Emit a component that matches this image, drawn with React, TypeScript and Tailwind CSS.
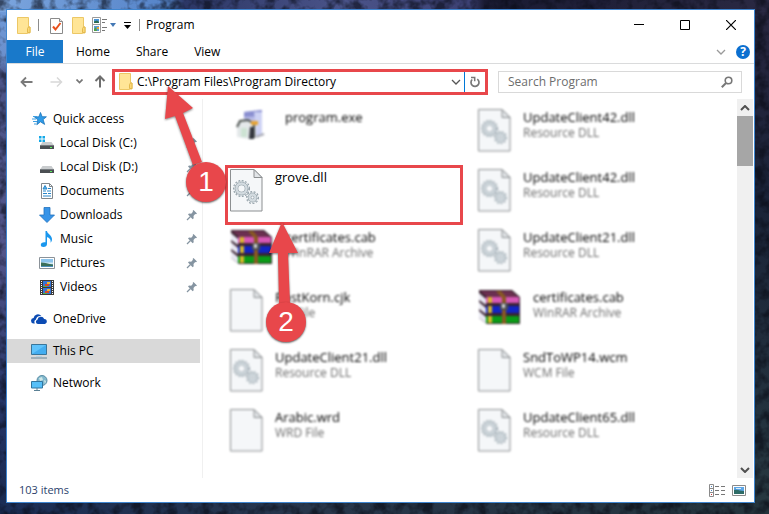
import type { ReactNode } from "react";

type FileKind = "dll" | "blank" | "rar" | "exe";

type FileItem = {
  name: string;
  type?: string;
  kind: FileKind;
  selected?: boolean;
};

const files: FileItem[] = [
  { name: "program.exe", kind: "exe" },
  { name: "UpdateClient42.dll", type: "Resource DLL", kind: "dll" },
  { name: "grove.dll", kind: "dll", selected: true },
  { name: "UpdateClient42.dll", type: "Resource DLL", kind: "dll" },
  { name: "certificates.cab", type: "WinRAR Archive", kind: "rar" },
  { name: "UpdateClient21.dll", type: "Resource DLL", kind: "dll" },
  { name: "PostKorn.cjk", type: "CJK File", kind: "blank" },
  { name: "certificates.cab", type: "WinRAR Archive", kind: "rar" },
  { name: "UpdateClient21.dll", type: "Resource DLL", kind: "dll" },
  { name: "SndToWP14.wcm", type: "WCM File", kind: "blank" },
  { name: "Arabic.wrd", type: "WRD File", kind: "blank" },
  { name: "UpdateClient65.dll", type: "Resource DLL", kind: "dll" },
];

const quickAccess = [
  { name: "Local Disk (C:)", icon: <DiskIcon system /> },
  { name: "Local Disk (D:)", icon: <DiskIcon /> },
  { name: "Documents", icon: <DocumentsIcon /> },
  { name: "Downloads", icon: <DownloadsIcon /> },
  { name: "Music", icon: <MusicIcon /> },
  { name: "Pictures", icon: <PicturesIcon /> },
  { name: "Videos", icon: <VideosIcon /> },
];

function FolderIcon() {
  return (
    <svg width="14" height="17" viewBox="0 0 14 17" className="shrink-0">
      <path d="M.5.5h11v9.500h1.500v6h-2.500v.5h-10z" fill="#ffe596" stroke="#ecc765" />
      <path d="M10.500 15.500v-4l1-1.500h1.500v5.500z" fill="#fcd978" stroke="#e3b94d" />
    </svg>
  );
}

function PropertiesIcon() {
  return (
    <svg width="13" height="17" viewBox="0 0 13 17">
      <path d="M.5 1.500h9l3 3v12H.5z" fill="#fff" stroke="#8a8a8a" />
      <path d="M9.500 1.500v3h3" fill="#e8e8e8" stroke="#8a8a8a" />
      <path d="M3 9.500l2.500 3L10.500 6" fill="none" stroke="#e8501c" strokeWidth="2" />
    </svg>
  );
}

function ViewIcon() {
  return (
    <svg width="16" height="16" viewBox="0 0 16 16">
      <path d="M.5.5h8v15h-8z" fill="#fff" stroke="#9a9a9a" />
      <path d="M2 2h5v4H2z" fill="#4a94d8" />
      <path d="M2 4.500l3-1 2 1.500v1H2z" fill="#2b6b54" />
      <path d="M1 7.500h8" stroke="#9a9a9a" />
      <path d="M2 9h5v5H2z" fill="#5b9bd8" />
      <path d="M2 12l2-2 1 4H2z" fill="#4d9f45" />
      <path d="M5 10h2v2H5z" fill="#e3a432" />
      <path d="M10 2.500h5M10 5.500h3M10 10.500h5M10 13.500h3" stroke="#777" />
    </svg>
  );
}

function StarIcon() {
  return (
    <svg width="16" height="16" viewBox="0 0 16 16">
      <path d="M9.500 1.500l1.600 4.200 4.300.1-3.300 2.800 1.500 4.800-4.100-2.600-3.700 2.900 1-4.900L3.500 6l4.400-.2z" fill="#2f9be8" stroke="#1a74b9" strokeWidth=".8" />
      <path d="M2 5.500h4M1 8h4M2 10.500h4M3 13h2" stroke="#3c9fe2" />
    </svg>
  );
}

function DiskIcon({ system = false }: { system?: boolean }) {
  return (
    <svg width="16" height="16" viewBox="0 0 16 16">
      {system && <path d="M0 1h2.500v2.500H0zM3.500 1H6v2.500H3.500zM0 4.500h2.500V7H0zM3.500 4.500H6V7H3.500z" fill="#12a8e8" />}
      <path d="M3.500 7h9L15 10.500H1z" fill="#c9ccce" />
      <path d="M1 10h14v4H1z" fill="#4b4f53" />
      <path d="M1 10.500h14" stroke="#777c80" />
      <path d="M11 12h2v1h-2z" fill="#5af05a" />
    </svg>
  );
}

function DocumentsIcon() {
  return (
    <svg width="16" height="16" viewBox="0 0 16 16">
      <path d="M2.500.5h8l3 3v12h-11z" fill="#fff" stroke="#80878c" />
      <path d="M10.500.5v3h3" fill="none" stroke="#80878c" />
      <path d="M4 6l2-3.500L8 6zM9 5.500h3M4 8h3M8 8h4M4 10.500h4M9 10.500h3M4 13h8" stroke="#2786c9" fill="#61b3ea" />
    </svg>
  );
}

function DownloadsIcon() {
  return (
    <svg width="16" height="16" viewBox="0 0 16 16">
      <path d="M5 .5h6V8h4.500L8 15.500.5 8H5z" fill="#3794e8" stroke="#2272be" strokeWidth=".8" />
    </svg>
  );
}

function MusicIcon() {
  return (
    <svg width="16" height="16" viewBox="0 0 16 16">
      <path d="M6.500 0H8c0 3 5.500 4 5 9-.2 1.200-.7 2-1.500 2.800C12.200 8.500 10.500 7 8 6v7c0 1.800-1.500 3-3.500 3S1.800 15 1.800 13.700c0-1.700 2.200-3 4.700-2.400z" fill="#1a97ee" />
    </svg>
  );
}

function PicturesIcon() {
  return (
    <svg width="16" height="16" viewBox="0 0 16 16">
      <path d="M.5 2.500h15v11H.5z" fill="#fff" stroke="#8b9299" />
      <path d="M2 4h12v8H2z" fill="#8cc4ec" />
      <path d="M2 7.500h12V9H2z" fill="#d9edf5" />
      <path d="M2 7.500c4 0 7 1.500 12 2V12H2z" fill="#3b6f5a" />
      <path d="M2 11h12v1H2z" fill="#4c8fbb" />
    </svg>
  );
}

function VideosIcon() {
  return (
    <svg width="16" height="16" viewBox="0 0 16 16">
      <path d="M1 1h14v15H1z" fill="#3c3c3c" />
      <path d="M4 2h8v6H4zM4 9h8v6H4z" fill="#3676d8" />
      <path d="M8 3h3v2H8zM8 10h3v2H8z" fill="#f2b52d" />
      <path d="M6 5h4v2H6zM6 12h4v2H6z" fill="#d84a2b" />
      <path d="M4 7h4v1H4zM4 14h4v1H4z" fill="#57b247" />
      <path d="M2.500 2v13M13.500 2v13" stroke="#fff" strokeDasharray="1 1" />
    </svg>
  );
}

function OneDriveIcon() {
  return (
    <svg width="17" height="16" viewBox="0 0 17 16">
      <path d="M3.800 12.500H3A2.700 2.700 0 0 1 2.600 7 4.300 4.300 0 0 1 10.300 5C7 4.500 5.200 6.500 5 8.500c-1.700.6-2 2.500-1.200 4z" fill="#0b4bb3" />
      <path d="M7 13a2.200 2.200 0 0 1-.6-4.300 3.600 3.600 0 0 1 6.800-.8A2.600 2.600 0 0 1 14 13z" fill="#0b4bb3" />
    </svg>
  );
}

function ComputerIcon() {
  return (
    <svg width="17" height="16" viewBox="0 0 17 16">
      <path d="M.5 1.500h15v10H.5z" fill="#5fc3fb" stroke="#3a7599" />
      <path d="M1 11L15 2v9z" fill="#43adf0" />
      <path d="M5 13.500h6" stroke="#b6d3e3" />
      <path d="M0 15h16" stroke="#668698" />
    </svg>
  );
}

function NetworkIcon() {
  return (
    <svg width="17" height="16" viewBox="0 0 17 16">
      <circle cx="11" cy="5.500" r="5" fill="#83b9cd" stroke="#5a8da6" />
      <path d="M8 3l3-1 1 3-3 1zM13 5l2 1-1 3z" fill="#d0e8e8" />
      <path d="M.5 6.500h11v6.500H.5z" fill="#56bff8" stroke="#32759f" />
      <path d="M6 13v2M3 15.500h6" stroke="#5b8195" />
    </svg>
  );
}

function PinIcon() {
  return (
    <svg width="12" height="12" viewBox="0 0 12 12" className="ml-auto">
      <path d="M7.500 1l3.500 3.500-1 .8-.8-.2-1.700 2 .2 2.200-1 1L2 5.500l1-1 2.200.2 1.800-1.900-.4-.8z" fill="#8594a1" />
      <path d="M4.500 7.500L1 11" stroke="#8594a1" strokeWidth="1.200" />
    </svg>
  );
}

function Chevron({ up = false, bold = false }: { up?: boolean; bold?: boolean }) {
  return (
    <svg width="10" height="6" viewBox="0 0 10 6">
      <path d={up ? "M1 5l4-4 4 4" : "M1 1l4 4 4-4"} fill="none" stroke="currentColor" strokeWidth={bold ? 2 : 1.3} />
    </svg>
  );
}

function Gear({ cx, cy, r }: { cx: number; cy: number; r: number }) {
  return (
    <g fill="none">
      <circle cx={cx} cy={cy} r={r} stroke="#8e9ba3" strokeWidth="3" strokeDasharray="1.600 1.400" />
      <circle cx={cx} cy={cy} r={r - 2} stroke="#8e9ba3" strokeWidth="3.500" />
      <circle cx={cx} cy={cy} r={r - 2} stroke="#d3dbe0" strokeWidth="2.400" />
      <circle cx={cx} cy={cy} r={r} stroke="#d3dbe0" strokeWidth="1.400" strokeDasharray="1 2" />
    </g>
  );
}

function PageIcon({ gears = false }: { gears?: boolean }) {
  return (
    <svg width="33" height="43" viewBox="0 0 33 43" className="shrink-0">
      <path d="M.5.500h23.500l8 8v33.500H.5z" fill="#f5f7f9" stroke="#8c8f91" />
      <path d="M24 .5v8h8z" fill="#e2e5e8" stroke="#8c8f91" />
      {gears && (
        <>
          <Gear cx={11.500} cy={19.500} r={7} />
          <Gear cx={22.500} cy={28.500} r={5} />
        </>
      )}
    </svg>
  );
}

function RarIcon() {
  return (
    <svg width="43" height="37" viewBox="0 0 43 37" className="shrink-0">
      <path d="M1 1h33l8 7v27H9L1 29z" fill="#3a2230" />
      <path d="M2 2h31l7 6H9z" fill="#6b2f50" />
      <path d="M1 4l7 6v6l-7-5zM1 13l7 6v6l-7-5zM1 22l7 6v6l-7-5z" fill="#e8e8f2" />
      <path d="M8 8h33v6H8z" fill="#d657b5" />
      <path d="M8 17h33v7H8z" fill="#1224c4" />
      <path d="M8 27h33v7H8z" fill="#0a9b17" />
      <path d="M10 8h4v6h-4zM10 17h4v7h-4zM10 27h4v7h-4z" fill="#d8b92b" />
      <path d="M18 2h5l5 6v27h-4V9z" fill="#8a5a22" />
      <path d="M22 14h8v7h-8z" fill="#4b4f55" />
      <path d="M24 15h3v4h-3z" fill="#d5d5d5" />
    </svg>
  );
}

function ExeIcon() {
  return (
    <svg width="33" height="33" viewBox="0 0 33 33" className="ml-1 shrink-0">
      <path d="M10 3l18-2v22l-4 5-14-2z" fill="#b9bce8" />
      <path d="M10 3l18-2v6l-18 1z" fill="#8a8fd0" />
      <path d="M20 3h8v23l-5 2z" fill="#cdd2f4" />
      <path d="M3 15l10-4 9 3v14l-8 2-11-2z" fill="#e4e8ea" />
      <path d="M3 18l3-6 8-1 6 4v14" fill="none" stroke="#4c524f" strokeWidth="2" />
      <path d="M17 12h7v4h-7z" fill="#e7a436" />
      <path d="M16 18h4v12h-5z" fill="#34373f" />
      <path d="M7 19h6v9H7z" fill="#cde3d3" />
      <path d="M22 28l8-3" stroke="#a6a8b2" strokeWidth="2" />
    </svg>
  );
}

function FileIcon({ kind }: { kind: FileKind }) {
  if (kind === "rar") return <RarIcon />;
  if (kind === "exe") return <ExeIcon />;
  return <PageIcon gears={kind === "dll"} />;
}

function FileTile({ file }: { file: FileItem }) {
  return (
    <li className={file.selected ? "mr-[10px] border-3 border-[#e8474b]" : "border-3 border-transparent"}>
      <button
        className={`flex h-[54px] w-full items-start px-[2px] pt-px text-left ${
          file.kind === "exe" ? "gap-[18px]" : "gap-3"
        } ${file.selected ? "" : "blur-[1px]"}`}
      >
        <FileIcon kind={file.kind} />
        <span className="leading-4">
          <span className="block text-[13px] text-black">{file.name}</span>
          {file.type && <span className="block text-[#6d6d6d]">{file.type}</span>}
        </span>
      </button>
    </li>
  );
}

function NavItem({ icon, label, active = false }: { icon: ReactNode; label: string; active?: boolean }) {
  return (
    <a
      href="#"
      className={`flex h-6 items-center gap-[5px] pl-6 ${active ? "bg-[#d9d9d9]" : ""}`}
    >
      <span className="w-[17px]">{icon}</span>
      {label}
    </a>
  );
}

function Wallpaper() {
  return (
    <svg className="absolute inset-0 h-full w-full" viewBox="0 0 769 514" preserveAspectRatio="none" aria-hidden="true">
      <defs>
        <linearGradient id="top" x1="0" x2="1" y1="0" y2="0">
          <stop offset="0" stopColor="#7ba5de" />
          <stop offset=".22" stopColor="#5583c8" />
          <stop offset=".24" stopColor="#2c3765" />
          <stop offset=".45" stopColor="#4b548a" />
          <stop offset=".61" stopColor="#3c4072" />
          <stop offset=".63" stopColor="#191a32" />
          <stop offset="1" stopColor="#2a2943" />
        </linearGradient>
        <linearGradient id="left" x1="0" x2="0" y1="0" y2="1">
          <stop offset="0" stopColor="#6f9bda" />
          <stop offset=".11" stopColor="#6c90cc" />
          <stop offset=".15" stopColor="#4a5489" />
          <stop offset=".5" stopColor="#54558a" />
          <stop offset=".8" stopColor="#263668" />
          <stop offset="1" stopColor="#1a2a50" />
        </linearGradient>
        <linearGradient id="right" x1="0" x2="0" y1="0" y2="1">
          <stop offset="0" stopColor="#28263f" />
          <stop offset=".4" stopColor="#1a2338" />
          <stop offset="1" stopColor="#273840" />
        </linearGradient>
        <linearGradient id="bottom" x1="0" x2="1" y1="0" y2="0">
          <stop offset="0" stopColor="#1b2d55" />
          <stop offset=".4" stopColor="#27364b" />
          <stop offset="1" stopColor="#24343c" />
        </linearGradient>
        <filter id="grain" x="0" y="0" width="1" height="1" colorInterpolationFilters="sRGB">
          <feTurbulence type="fractalNoise" baseFrequency=".09" numOctaves="3" seed="4" />
          <feColorMatrix values="0 0 0 0 .03  0 0 0 0 .04  0 0 0 0 .08  3 0 0 0 -1.200" />
        </filter>
      </defs>
      <path d="M0 0h769v514H0z" fill="url(#bottom)" />
      <path d="M0 0h20v500H0z" fill="url(#left)" />
      <path d="M740 0h29v500h-29z" fill="url(#right)" />
      <path d="M0 0h769v12H0z" fill="url(#top)" />
      <path d="M0 66h769v448H0zM176 0h593v66H176z" filter="url(#grain)" opacity=".6" />
    </svg>
  );
}

export default function App() {
  return (
    <div className="relative flex min-h-screen flex-col pt-[9px] pr-[14px] pb-[11px] pl-[6px] font-['Open_Sans','Noto_Sans',sans-serif] text-[12px] leading-4 text-black">
      <Wallpaper />

      <div className="relative flex flex-1 flex-col border border-[#3f86d0] bg-white">
        {/* Title bar */}
        <header className="flex h-[30px] items-center pl-[10px]">
          <FolderIcon />
          <span className="ml-[7px] h-3 w-px bg-[#8c8c8c]" />
          <button aria-label="Properties" className="ml-[11px]"><PropertiesIcon /></button>
          <button aria-label="New folder" className="ml-[9px]"><FolderIcon /></button>
          <button aria-label="Change view" className="ml-[6px] flex items-center gap-[2px]">
            <ViewIcon />
            <svg width="6" height="4" viewBox="0 0 6 4"><path d="M0 0h6L3 4z" fill="#4478b5" /></svg>
          </button>
          <button aria-label="Customize toolbar" className="ml-2">
            <svg width="7" height="7" viewBox="0 0 7 7"><path d="M0 0h7v1H0zM0 3h7L3.500 7z" fill="#000" /></svg>
          </button>
          <span className="ml-2 h-3 w-px bg-[#8c8c8c]" />
          <h1 className="ml-[6px]">Program</h1>
          <div className="ml-auto flex self-stretch">
            <button aria-label="Minimize" className="flex w-[46px] items-center justify-center">
              <svg width="10" height="10" viewBox="0 0 10 10"><path d="M0 4.500h10" stroke="#000" /></svg>
            </button>
            <button aria-label="Maximize" className="flex w-[46px] items-center justify-center">
              <svg width="10" height="10" viewBox="0 0 10 10"><path d="M.5.500h9v9h-9z" fill="none" stroke="#000" /></svg>
            </button>
            <button aria-label="Close" className="flex w-[46px] items-center justify-center">
              <svg width="10" height="10" viewBox="0 0 10 10"><path d="M0 0l10 10M10 0L0 10" stroke="#000" strokeWidth="1.200" /></svg>
            </button>
          </div>
        </header>

        {/* Ribbon tabs */}
        <nav className="flex h-6 items-stretch border-b border-[#dadbdc]">
          <button className="w-14 bg-[#1979ca] text-white">File</button>
          <button className="px-[13px]">Home</button>
          <button className="px-[13px]">Share</button>
          <button className="px-[13px]">View</button>
          <button aria-label="Expand ribbon" className="ml-auto text-[#9a9a9a]"><Chevron /></button>
          <button aria-label="Help" className="mr-1 ml-[10px]">
            <span className="flex size-[14px] items-center justify-center rounded-full bg-[#0b6fd0] text-[12px] font-bold text-white">?</span>
          </button>
        </nav>

        {/* Address bar */}
        <div className="flex h-[35px] items-center pr-3 pl-[13px] text-[#7a7a7a]">
          <button aria-label="Back">
            <svg width="13" height="12" viewBox="0 0 13 12"><path d="M12.500 6H1.500M6 1.500L1.500 6 6 10.500" fill="none" stroke="#7a7a7a" strokeWidth="1.800" /></svg>
          </button>
          <button aria-label="Forward" className="ml-[17px]">
            <svg width="13" height="12" viewBox="0 0 13 12"><path d="M.5 6h11M7 1.500L11.500 6 7 10.500" fill="none" stroke="#d8d8d8" strokeWidth="1.500" /></svg>
          </button>
          <button aria-label="Recent locations" className="ml-[13px]">
            <svg width="7" height="5" viewBox="0 0 7 5"><path d="M.5.500l3 3 3-3" fill="none" stroke="#777" strokeWidth="1.700" /></svg>
          </button>
          <button aria-label="Up" className="ml-[11px]">
            <svg width="12" height="13" viewBox="0 0 12 13"><path d="M6 12.500v-11M1.500 6L6 1.500 10.500 6" fill="none" stroke="#6e6e6e" strokeWidth="2" /></svg>
          </button>
          <div className="ml-[6px] flex h-[26px] flex-1 items-center border-3 border-[#e8474b] pl-1">
            <FolderIcon />
            <input aria-label="Address" defaultValue="C:\Program Files\Program Directory" className="ml-1 min-w-0 flex-1 text-black outline-none" />
            <button aria-label="Previous locations" className="mr-[3px] text-[#555]"><Chevron /></button>
            <button aria-label="Refresh" className="flex w-[21px] items-center justify-center self-stretch border-l border-[#0078d7]">
              <svg width="12" height="12" viewBox="0 0 12 12">
                <path d="M8.300 3.100A4 4 0 1 1 3.200 3.500" fill="none" stroke="#777" strokeWidth="1.700" />
                <path d="M2 1.600h3.700v3.700" fill="none" stroke="#777" strokeWidth="1.500" />
              </svg>
            </button>
          </div>
          <div className="ml-[10px] flex h-[22px] w-[244px] items-center border border-[#d9d9d9] pr-2 pl-[9px]">
            <input aria-label="Search Program" placeholder="Search Program" className="min-w-0 flex-1 outline-none placeholder:text-[#6d6d6d]" />
            <svg width="12" height="12" viewBox="0 0 12 12">
              <circle cx="7.500" cy="4.500" r="3.300" fill="none" stroke="#777" strokeWidth="1.600" />
              <path d="M5 7L.800 11.200" stroke="#777" strokeWidth="2" />
            </svg>
          </div>
        </div>

        <div className="flex flex-1">
          {/* Navigation pane */}
          <aside className="w-[196px] border-r border-[#f0f0f0] pt-2">
            <div className="mr-[2px] space-y-2">
              <div>
                <NavItem icon={<StarIcon />} label="Quick access" />
                {quickAccess.map((item) => (
                  <a key={item.name} href="#" className="flex h-6 items-center gap-[5px] pr-[2px] pl-8">
                    {item.icon}
                    {item.name}
                    <PinIcon />
                  </a>
                ))}
              </div>
              <NavItem icon={<OneDriveIcon />} label="OneDrive" />
              <NavItem icon={<ComputerIcon />} label="This PC" active />
              <NavItem icon={<NetworkIcon />} label="Network" />
            </div>
          </aside>

          {/* File list */}
          <main className="flex-1 pt-[6px] pl-[22px]">
            <ul className="grid grid-cols-[248px_1fr]">
              {files.map((file, i) => (
                <FileTile key={i} file={file} />
              ))}
            </ul>
          </main>

          <div className="mr-px flex w-4 flex-col items-center bg-[#f0f0f0] text-[#505050]">
            <button aria-label="Scroll up" className="flex h-[17px] items-center"><Chevron up bold /></button>
            <div className="h-[50px] w-full bg-[#a6a6a6]" />
            <button aria-label="Scroll down" className="mt-auto flex h-[17px] items-center"><Chevron bold /></button>
          </div>
        </div>

        {/* Status bar */}
        <footer className="flex h-6 items-center gap-[7px] pr-2 pl-3 text-[#2b3f6b]">
          <span className="mr-auto text-[11px]">103 items</span>
          <button aria-label="Details view">
            <svg width="16" height="13" viewBox="0 0 16 13">
              <path d="M.5.500h4v12h-4zM.500 4.500h4M.500 8.500h4" fill="none" stroke="#8a8a8a" />
              <path d="M2 2h1v1H2zM2 6h1v1H2z" fill="#4a84c4" />
              <path d="M2 10h1v1H2z" fill="#c33" />
              <path d="M6 2.500h10M6 6.500h10M6 10.500h10" stroke="#777" strokeDasharray="4 2" />
            </svg>
          </button>
          <button aria-label="Large icons view">
            <svg width="14" height="11" viewBox="0 0 14 11">
              <path d="M.5.500h13v10H.5z" fill="#fff" stroke="#8a8a8a" />
              <path d="M2 2h10v7H2z" fill="#5ea7e8" />
              <path d="M2 5c4-1 6 1 10 1v3H2z" fill="#2d6b66" />
              <path d="M4 3h5v1H4z" fill="#dceefa" />
            </svg>
          </button>
        </footer>

        {/* Step markers */}
        <svg className="pointer-events-none absolute top-0 left-0 drop-shadow-[0_1px_1px_rgba(0,0,0,0.5)]" width="320" height="340" viewBox="7 10 320 340">
          <path d="M168 86l25 22-10 5 19 49-9 3-18-49-10 3z" fill="#e8474b" />
          <path d="M282 222l16 31h-10l2 51h-11l-1-51h-9z" fill="#e8474b" />
        </svg>
        <span className="absolute top-[152px] left-[179px] flex size-10 items-center justify-center rounded-full bg-[#e8474b] font-['Liberation_Sans',sans-serif] text-[28px] text-white shadow-[0_1px_2px_rgba(0,0,0,0.6)]">1</span>
        <span className="absolute top-[292px] left-[259px] flex size-10 items-center justify-center rounded-full bg-[#e8474b] font-['Liberation_Sans',sans-serif] text-[28px] text-white shadow-[0_1px_2px_rgba(0,0,0,0.6)]">2</span>
      </div>
    </div>
  );
}
